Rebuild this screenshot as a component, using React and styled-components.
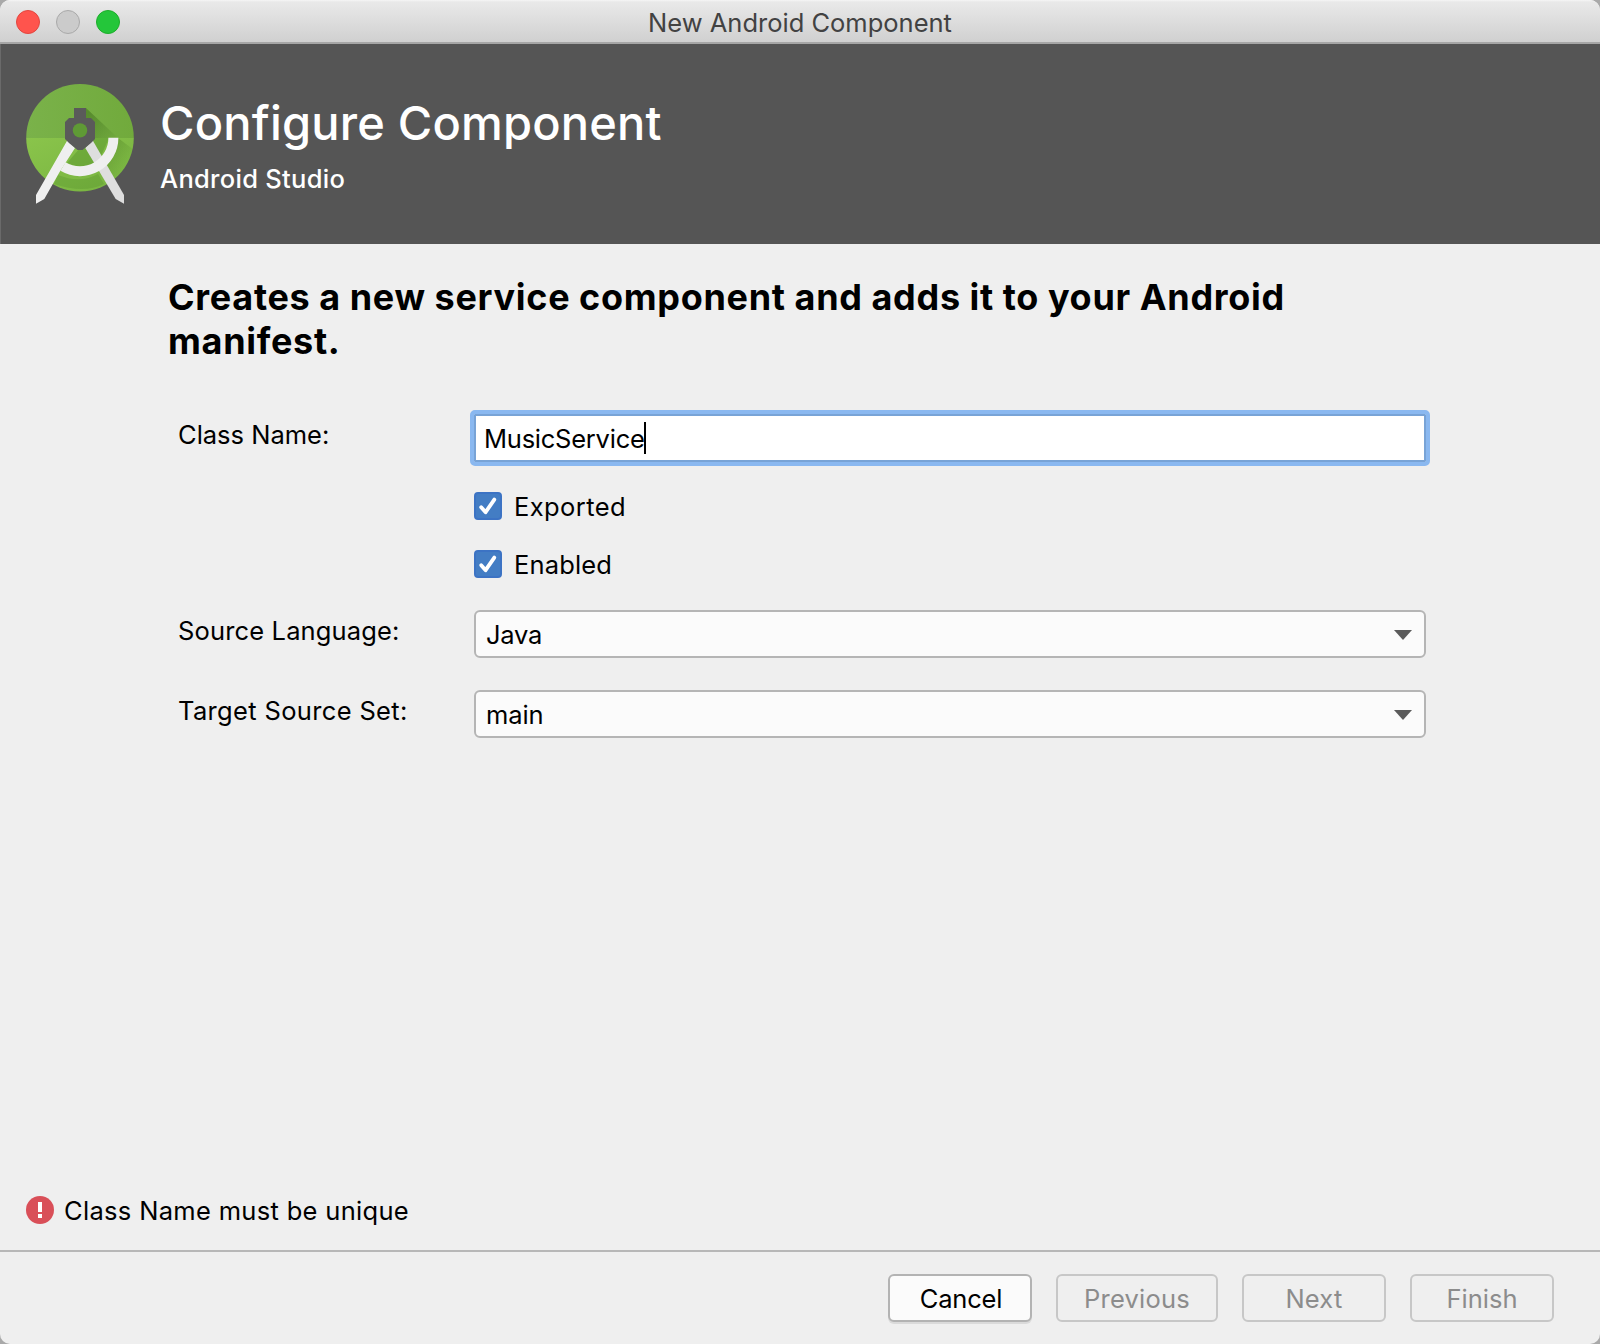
import React from "react";
import styled, { createGlobalStyle } from "styled-components";

const Global = createGlobalStyle`
  * { box-sizing: border-box; }
  html, body { margin: 0; padding: 0; background: #a9a9a9; }
  body { font-family: Inter, "Liberation Sans", sans-serif; }
`;

const Window = styled.div`
  width: 1600px;
  height: 1344px;
  display: flex;
  flex-direction: column;
  background: #efefef;
  border-radius: 10px;
  overflow: hidden;
  color: #000;
`;

const Label = styled.span`
  font-size: 25.5px;
  letter-spacing: ${(p) => p.$track || 0}px;
  line-height: 32px;
  font-weight: ${(p) => p.$weight || 400};
  white-space: nowrap;
`;

const TitleBar = styled.header`
  height: 44px;
  flex: none;
  display: grid;
  grid-template-columns: 1fr auto 1fr;
  align-items: center;
  padding: 2px 16px 0;
  background: linear-gradient(#f6f6f6 0, #e9e9e9 2px, #d0d0d0 42px);
  border-bottom: 2px solid #a6a6a6;
  color: #424242;
`;

const TitleText = styled.div`
  display: flex;
  padding-top: 2px;
`;

const Lights = styled.div`
  display: flex;
  gap: 16px;
`;

const Light = styled.i`
  width: 24px;
  height: 24px;
  border-radius: 50%;
  background: ${(p) => p.$fill};
  border: 1px solid ${(p) => p.$edge};
`;

const Banner = styled.section`
  height: 200px;
  flex: none;
  display: flex;
  padding: 36px 19px 0;
  gap: 20px;
  background: #555;
  border-left: 1px solid #6a6a6a;
  color: #fff;
`;

const BannerText = styled.div`
  display: flex;
  flex-direction: column;
  padding-top: 14px;
`;

const BannerTitle = styled.h1`
  margin: 0;
  font-size: 47px;
  font-weight: 500;
  line-height: 58px;
  letter-spacing: 0.2px;
`;

const BannerSub = styled.div`
  padding-top: 11px;
  display: flex;
`;

const Body = styled.main`
  flex: 1;
  display: flex;
  flex-direction: column;
  padding: 31px 0 0;
`;

const Intro = styled.h2`
  margin: 0 0 0 168px;
  width: 1200px;
  font-size: 36px;
  line-height: 44px;
  font-weight: 700;
  letter-spacing: 0.7px;
  word-spacing: -0.4px;
`;

const Form = styled.div`
  margin: 47px 174px 0 178px;
  display: grid;
  grid-template-columns: 296px 952px;
  grid-template-rows: 56px 144px 48px 32px 48px;
`;

const FieldLabel = styled.label`
  grid-column: 1;
  grid-row: ${(p) => p.$row};
  padding-top: ${(p) => p.$top}px;
  display: flex;
  align-items: flex-start;
`;

const TextInput = styled.div`
  grid-column: 2;
  grid-row: 1;
  margin: 0 -4px;
  height: 56px;
  display: flex;
  align-items: flex-start;
  padding: 8px 0 0 10px;
  background: #fff;
  border: 4px solid #8ab8f0;
  border-radius: 5px;
  box-shadow: inset 0 0 0 2px #78a3d6;
`;

const InputText = styled(Label)`
  margin-top: 1px;
`;

const Caret = styled.i`
  width: 2px;
  height: 32px;
  margin-left: -1px;
  background: #000;
`;

const Checks = styled.div`
  grid-column: 2;
  grid-row: 2;
  padding-top: 26px;
  display: flex;
  flex-direction: column;
  gap: 30px;
`;

const CheckRow = styled.div`
  height: 28px;
  display: flex;
  align-items: flex-start;
  gap: 12px;
`;

const CheckBox = styled.span`
  width: 28px;
  height: 28px;
  display: flex;
  background: #437dc4;
  border: 2px solid #3c73c4;
  border-radius: 4px;
`;

const CheckLabel = styled(Label)`
  margin-top: -1px;
`;

const Select = styled.div`
  grid-column: 2;
  grid-row: ${(p) => p.$row};
  height: 48px;
  display: flex;
  align-items: flex-start;
  justify-content: space-between;
  padding: 7px 12px 0 10px;
  background: #fbfbfb;
  border: 2px solid #b5b5b5;
  border-radius: 6px;
`;

const ArrowIcon = styled.svg`
  width: 18px;
  height: 10px;
  margin-top: 11px;
`;

const ErrorRow = styled.div`
  margin-top: auto;
  height: 70px;
  display: flex;
  align-items: flex-start;
  gap: 10px;
  padding: 15px 26px 0;
`;

const AlertIcon = styled.svg`
  width: 28px;
  height: 28px;
  margin-top: 1px;
`;

const Footer = styled.footer`
  height: 94px;
  flex: none;
  border-top: 2px solid #b7b7b7;
  display: flex;
  justify-content: flex-end;
  gap: 24px;
  padding: 22px 46px 0;
`;

const Button = styled.div`
  width: ${(p) => p.$w || 144}px;
  height: 48px;
  display: flex;
  align-items: flex-start;
  justify-content: center;
  padding: 7px 0 0 ${(p) => (p.$on ? 2 : 0)}px;
  border: 2px solid ${(p) => (p.$on ? "#b3b3b3" : "#c7c7c7")};
  border-radius: 6px;
  background: ${(p) => (p.$on ? "#fbfbfb" : "transparent")};
  color: ${(p) => (p.$on ? "#000" : "#8c8c8c")};
  box-shadow: ${(p) => (p.$on ? "0 2px 0 #dadada" : "none")};
`;

const Logo = () => (
  <svg width="120" height="130" viewBox="20 80 120 130">
    <defs>
      <linearGradient id="top" x1="0" y1="0" x2="1" y2="0">
        <stop offset="0" stopColor="#7ab24a" />
        <stop offset="1" stopColor="#71aa3c" />
      </linearGradient>
      <linearGradient id="low" x1="0" y1="0" x2="1" y2="1">
        <stop offset="0" stopColor="#8ac44b" />
        <stop offset="1" stopColor="#76b23f" />
      </linearGradient>
      <linearGradient id="cast" gradientUnits="userSpaceOnUse" x1="86" y1="115" x2="114" y2="140">
        <stop offset="0" stopColor="#3e6f1c" stopOpacity="0.55" />
        <stop offset="1" stopColor="#3e6f1c" stopOpacity="0.05" />
      </linearGradient>
      <linearGradient id="under" gradientUnits="userSpaceOnUse" x1="100" y1="150" x2="124" y2="170">
        <stop offset="0" stopColor="#3e6f1c" stopOpacity="0.4" />
        <stop offset="1" stopColor="#3e6f1c" stopOpacity="0" />
      </linearGradient>
      <clipPath id="disc"><circle cx="80" cy="137.7" r="53.8" /></clipPath>
    </defs>
    <g clipPath="url(#disc)">
      <rect x="26" y="83" width="108" height="55" fill="url(#top)" />
      <rect x="26" y="138" width="108" height="54" fill="url(#low)" />
      <path d="M86 108L118 138H92L80 130Z" fill="url(#cast)" />
      <path d="M80 148L67 163Q88 172 100 158L109 138H92Z" fill="#3e7a1c" opacity="0.28" />
      <path d="M118 138L134 150L128 180L112 190L102 170Q116 158 118 138Z" fill="url(#under)" />
      <path d="M58 175Q80 184 98 174L104 184Q84 194 54 184Z" fill="#3e7a1c" opacity="0.2" />
    </g>
    <path d="M92.5 140L124 195L124 203.7L115.7 199L85.3 148Z" fill="#dedede" />
    <path d="M113.4 137.7A33.4 33.4 0 0 1 63 166.5" fill="none" stroke="#efefef" strokeWidth="10" />
    <path d="M67.5 140L36 195L36 203.7L44.3 199L59.6 172L75 148Z" fill="#efefef" />
    <path d="M74 108H86V118H91L95 122V139L91 143L82.5 150H77.5L69 143L65 139V122L69 118H74Z" fill="#5a5a5a" />
    <circle cx="80" cy="130.4" r="7.2" fill="#5f9a35" />
  </svg>
);

const Tick = () => (
  <svg width="24" height="24" viewBox="0 0 24 24">
    <path d="M5.2 13.2L9.6 18.2L18.3 5.6" fill="none" stroke="#fff" strokeWidth="3.8" strokeLinecap="round" strokeLinejoin="round" />
  </svg>
);

const Arrow = () => (
  <ArrowIcon viewBox="0 0 18 10">
    <path d="M0 0H18L9 10Z" fill="#5b5b5b" />
  </ArrowIcon>
);

const Alert = () => (
  <AlertIcon viewBox="0 0 28 28">
    <circle cx="14" cy="14" r="14" fill="#d94f58" />
    <rect x="12" y="6" width="4" height="10" fill="#fff" />
    <rect x="12" y="18" width="4" height="4" fill="#fff" />
  </AlertIcon>
);

export default function App() {
  return (
    <>
      <Global />
      <Window>
        <TitleBar>
          <Lights>
            <Light $fill="#ff544d" $edge="#e2463f" />
            <Light $fill="#cbcbcb" $edge="#a9a9a9" />
            <Light $fill="#24c63a" $edge="#1dad2b" />
          </Lights>
          <TitleText><Label>New Android Component</Label></TitleText>
        </TitleBar>
        <Banner>
          <Logo />
          <BannerText>
            <BannerTitle>Configure Component</BannerTitle>
            <BannerSub><Label $weight={500} $track={0.3}>Android Studio</Label></BannerSub>
          </BannerText>
        </Banner>
        <Body>
          <Intro>Creates a new service component and adds it to your Android manifest.</Intro>
          <Form>
            <FieldLabel $row={1} $top={9}><Label>Class Name:</Label></FieldLabel>
            <TextInput><InputText $track={-0.24}>MusicService</InputText><Caret /></TextInput>
            <Checks>
              <CheckRow><CheckBox><Tick /></CheckBox><CheckLabel $track={0.4}>Exported</CheckLabel></CheckRow>
              <CheckRow><CheckBox><Tick /></CheckBox><CheckLabel $track={0.15}>Enabled</CheckLabel></CheckRow>
            </Checks>
            <FieldLabel $row={3} $top={5}><Label $track={0.15}>Source Language:</Label></FieldLabel>
            <Select $row={3}><Label $track={-0.2}>Java</Label><Arrow /></Select>
            <FieldLabel $row={5} $top={5}><Label $track={0.34}>Target Source Set:</Label></FieldLabel>
            <Select $row={5}><Label $track={-0.1}>main</Label><Arrow /></Select>
          </Form>
          <ErrorRow><Alert /><Label $track={0.32}>Class Name must be unique</Label></ErrorRow>
        </Body>
        <Footer>
          <Button $on><Label $track={-0.2}>Cancel</Label></Button>
          <Button $w={162}><Label $track={0.2}>Previous</Label></Button>
          <Button><Label $track={0.2}>Next</Label></Button>
          <Button><Label>Finish</Label></Button>
        </Footer>
      </Window>
    </>
  );
}
